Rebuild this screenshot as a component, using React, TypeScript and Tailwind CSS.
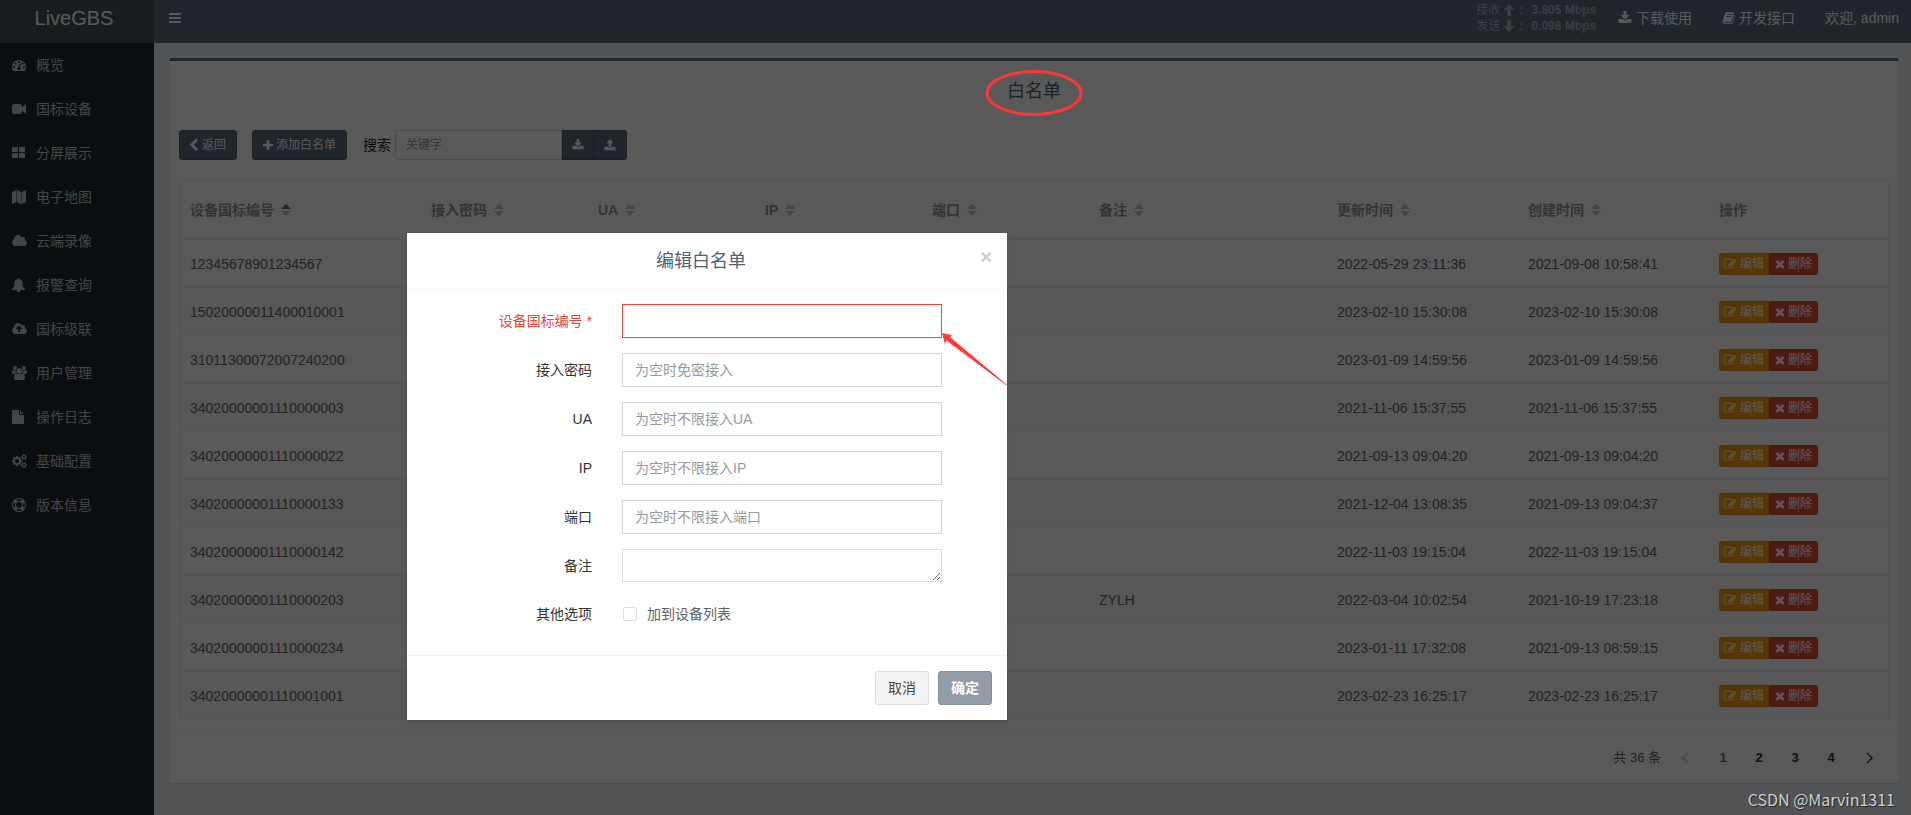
import type { ReactNode } from "react"

// Font Awesome 4 glyphs, drawn on a 1792 unit em
const DOT = "q0-26-19-45t-45-19-45 19-19 45 19 45 45 19 45-19 19-45z"
const SMALL_COG =
  "v140q0 16-149 31-12 27-30 52 51 113 51 138 0 4-4 7-122 71-124 71-8 0-46-47t-52-68q-20 2-30 2t-30-2q-14 21-52 68t-46 47q-2 0-124-71-4-3-4-7 0-25 51-138-18-25-30-52-149-15-149-31v-140q0-16 149-31 13-29 30-52-51-113-51-138 0-4 4-7 4-2 35-20t59-34 30-16q8 0 46 46.5t52 67.5q20-2 30-2t30 2q51-71 92-112l6-2q4 0 124 70 4 3 4 7 0 25-51 138 17 23 30 52 149 15 149 31z"
const CLOUD =
  "q0 159-112.5 271.5t-271.5 112.5h-1088q-185 0-316.5-131.5t-131.5-316.5q0-130 70-240t188-165q-2-30-2-43 0-212 150-362t362-150q156 0 285.5 87t188.5 231q71-62 166-62 106 0 181 75t75 181q0 76-41 138 130 31 213.5 135.5t83.5 238.5z"

const icons = {
  dashboard: "M384 1152q0-53-37.5-90.5t-90.5-37.5-90.5 37.5-37.5 90.5 37.5 90.5 90.5 37.5 90.5-37.5 37.5-90.5zm192-448q0-53-37.5-90.5t-90.5-37.5-90.5 37.5-37.5 90.5 37.5 90.5 90.5 37.5 90.5-37.5 37.5-90.5zm428 481l101-382q6-26-7.5-48.5t-38.5-29.5-48 6.5-30 39.5l-101 382q-60 5-107 43.5t-63 98.5q-20 77 20 146t117 89 146-20 89-117q16-60-6-117t-72-91zm660-33q0-53-37.5-90.5t-90.5-37.5-90.5 37.5-37.5 90.5 37.5 90.5 90.5 37.5 90.5-37.5 37.5-90.5zm-640-640q0-53-37.5-90.5t-90.5-37.5-90.5 37.5-37.5 90.5 37.5 90.5 90.5 37.5 90.5-37.5 37.5-90.5zm448 192q0-53-37.5-90.5t-90.5-37.5-90.5 37.5-37.5 90.5 37.5 90.5 90.5 37.5 90.5-37.5 37.5-90.5zm320 448q0 261-141 483-19 29-54 29h-1402q-35 0-54-29-141-221-141-483 0-182 71-348t191-286 286-191 348-71 348 71 286 191 191 286 71 348z",
  video: "M1792 352v1088q0 42-39 59-13 5-25 5-27 0-45-19l-403-403v166q0 119-84.5 203.5t-203.5 84.5h-704q-119 0-203.5-84.5t-84.5-203.5v-704q0-119 84.5-203.5t203.5-84.5h704q119 0 203.5 84.5t84.5 203.5v165l403-402q18-19 45-19 12 0 25 5 39 17 39 59z",
  grid: "M768 1024v384q0 52-38 90t-90 38h-512q-52 0-90-38t-38-90v-384q0-52 38-90t90-38h512q52 0 90 38t38 90zm0-768v384q0 52-38 90t-90 38h-512q-52 0-90-38t-38-90v-384q0-52 38-90t90-38h512q52 0 90 38t38 90zm896 768v384q0 52-38 90t-90 38h-512q-52 0-90-38t-38-90v-384q0-52 38-90t90-38h512q52 0 90 38t38 90zm0-768v384q0 52-38 90t-90 38h-512q-52 0-90-38t-38-90v-384q0-52 38-90t90-38h512q52 0 90 38t38 90z",
  map: "M512 0q13 0 22.5 9.5t9.5 22.5v1472q0 20-17 28l-480 256q-7 4-15 4-13 0-22.5-9.5t-9.5-22.5v-1472q0-20 17-28l480-256q7-4 15-4zm1248 0q13 0 22.5 9.5t9.5 22.5v1472q0 20-17 28l-480 256q-7 4-15 4-13 0-22.5-9.5t-9.5-22.5v-1472q0-20 17-28l480-256q7-4 15-4zm-1120 0q8 0 14 3l512 256q18 10 18 29v1472q0 13-9.5 22.5t-22.5 9.5q-8 0-14-3l-512-256q-18-10-18-29v-1472q0-13 9.5-22.5t22.5-9.5z",
  cloud: "M1920 1152" + CLOUD,
  bell: "M1664 1408q0 52-38 90t-90 38h-448q0 106-75 181t-181 75-181-75-75-181h-448q-52 0-90-38t-38-90q50-42 91-88t85-119.5 74.5-158.5 50-206 19.5-260q0-152 117-282.5t307-158.5q-8-19-8-39 0-40 28-68t68-28 68 28 28 68q0 20-8 39 190 28 307 158.5t117 282.5q0 139 19.5 260t50 206 74.5 158.5 85 119.5 91 88z",
  cloudUpload: "M1280 864q0-14-9-23l-352-352q-9-9-23-9t-23 9l-351 351q-10 12-10 24 0 14 9 23t23 9h224v352q0 13 9.5 22.5t22.5 9.5h192q13 0 22.5-9.5t9.5-22.5v-352h224q13 0 22.5-9.5t9.5-22.5zM1920 1152" + CLOUD,
  users: "M593 896q-162 5-265 128h-134q-82 0-138-40.5t-56-118.5q0-353 124-353 6 0 43.5 21t97.5 42.5 119 21.5q67 0 133-23-5 37-5 66 0 139 81 256zm1071 637q0 120-73 189.5t-194 69.5h-874q-121 0-194-69.5t-73-189.5q0-53 3.5-103.5t14-109 26.5-108.5 43-97.5 62-81 85.5-53.5 111.5-20q10 0 43 21.5t73 48 107 48 135 21.5 135-21.5 107-48 73-48 43-21.5q61 0 111.5 20t85.5 53.5 62 81 43 97.5 26.5 108.5 14 109 3.5 103.5zm-1024-1277q0 106-75 181t-181 75-181-75-75-181 75-181 181-75 181 75 75 181zm704 384q0 159-112.5 271.5t-271.5 112.5-271.5-112.5-112.5-271.5 112.5-271.5 271.5-112.5 271.5 112.5 112.5 271.5zm576 225q0 78-56 118.5t-138 40.5h-134q-103-123-265-128 81-117 81-256 0-29-5-66 66 23 133 23 59 0 119-21.5t97.5-42.5 43.5-21q124 0 124 353zm-128-609q0 106-75 181t-181 75-181-75-75-181 75-181 181-75 181 75 75 181z",
  file: "M1024 512v-472q22 14 36 28l408 408q14 14 28 36h-472zm-128 32q0 40 28 68t68 28h544v1056q0 40-28 68t-68 28h-1344q-40 0-68-28t-28-68v-1600q0-40 28-68t68-28h800v544z",
  cogs: "M896 896q0-106-75-181t-181-75-181 75-75 181 75 181 181 75 181-75 75-181zm768 512q0-52-38-90t-90-38-90 38-38 90q0 53 37.5 90.5t90.5 37.5 90.5-37.5 37.5-90.5zm0-1024q0-52-38-90t-90-38-90 38-38 90q0 53 37.5 90.5t90.5 37.5 90.5-37.5 37.5-90.5zm-384 421v185q0 10-7 19.5t-16 10.5l-155 24q-11 35-32 76 34 48 90 115 7 11 7 20 0 12-7 19-23 30-82.5 89.5t-78.5 59.5q-11 0-21-7l-115-90q-37 19-77 31-11 108-23 155-7 24-30 24h-186q-11 0-20-7.5t-10-17.5l-23-153q-34-10-75-31l-118 89q-7 7-20 7-11 0-21-8-144-133-144-160 0-9 7-19 10-14 41-53t47-61q-23-44-35-82l-152-24q-10-1-17-9.5t-7-19.5v-185q0-10 7-19.5t16-10.5l155-24q11-35 32-76-34-48-90-115-7-11-7-20 0-12 7-20 22-30 82-89t79-59q11 0 21 7l115 90q34-18 77-32 11-108 23-154 7-24 30-24h186q11 0 20 7.5t10 17.5l23 153q34 10 75 31l118-89q8-7 20-7 11 0 21 8 144 133 144 160 0 8-7 19-12 16-42 54t-45 60q23 48 34 82l152 23q10 2 17 10.5t7 19.5zM1920 1338" + SMALL_COG + "M1920 314" + SMALL_COG,
  lifeRing: "M896 0q182 0 348 71t286 191 191 286 71 348-71 348-191 286-286 191-348 71-348-71-286-191-191-286-71-348 71-348 191-286 286-191 348-71zm0 128q-190 0-361 90l194 194q82-28 167-28t167 28l194-194q-171-90-361-90zm-678 1129l194-194q-28-82-28-167t28-167l-194-194q-90 171-90 361t90 361zm678 407q190 0 361-90l-194-194q-82 28-167 28t-167-28l-194 194q171 90 361 90zm0-384q159 0 271.5-112.5t112.5-271.5-112.5-271.5-271.5-112.5-271.5 112.5-112.5 271.5 112.5 271.5 271.5 112.5zm484-217l194 194q90-171 90-361t-90-361l-194 194q28 82 28 167t-28 167z",
  bars: "M1664 1344v128q0 26-19 45t-45 19h-1408q-26 0-45-19t-19-45v-128q0-26 19-45t45-19h1408q26 0 45 19t19 45zm0-512v128q0 26-19 45t-45 19h-1408q-26 0-45-19t-19-45v-128q0-26 19-45t45-19h1408q26 0 45 19t19 45zm0-512v128q0 26-19 45t-45 19h-1408q-26 0-45-19t-19-45v-128q0-26 19-45t45-19h1408q26 0 45 19t19 45z",
  download: "M1344 1344" + DOT + "M1600 1344" + DOT + "M1728 1120v320q0 40-28 68t-68 28h-1472q-40 0-68-28t-28-68v-320q0-40 28-68t68-28h465l135 136q58 56 136 56t136-56l136-136h464q40 0 68 28t28 68zm-325-569q17 41-14 70l-448 448q-18 19-45 19t-45-19l-448-448q-31-29-14-70 17-39 59-39h256v-448q0-26 19-45t45-19h256q26 0 45 19t19 45v448h256q42 0 59 39z",
  upload: "M1344 1472" + DOT + "M1600 1472" + DOT + "M1728 1248v320q0 40-28 68t-68 28h-1472q-40 0-68-28t-28-68v-320q0-40 28-68t68-28h427q21 56 70.5 92t110.5 36h256q61 0 110.5-36t70.5-92h427q40 0 68 28t28 68zm-325-648q-17 40-59 40h-256v448q0 26-19 45t-45 19h-256q-26 0-45-19t-19-45v-448h-256q-42 0-59-40-17-39 14-69l448-448q18-19 45-19t45 19l448 448q31 30 14 69z",
  book: "M1703 478q40 57 18 129l-275 906q-19 64-76.5 107.5t-122.5 43.5h-923q-77 0-148.5-53.5t-99.5-131.5q-24-67-2-127 0-4 3-27t4-37q1-8-3-21.5t-3-19.5q2-11 8-21t16.5-23.5 16.5-23.5q23-38 45-91.5t30-91.5q3-10 .5-30t-.5-28q3-11 17-28t17-23q21-36 42-92t25-90q1-9-2.5-32t.5-28q4-13 22-30.5t22-22.5q19-26 42.5-84.5t27.5-96.5q1-8-3-25.5t-2-26.5q2-8 9-18t18-23 17-21q8-12 16.5-30.5t15-35 16-36 19.5-32 26.5-23.5 36-11.5 47.5 5.5l-1 3q38-9 51-9h761q74 0 114 56t18 130l-274 906q-36 119-71.5 153.5t-128.5 34.5h-869q-27 0-38 15-11 16-1 43 24 70 144 70h923q29 0 56-15.5t35-41.5l300-987q7-22 5-57 38 15 59 43zm-1064 2q-4 13 2 22.5t20 9.5h608q13 0 25.5-9.5t16.5-22.5l21-64q4-13-2-22.5t-20-9.5h-608q-13 0-25.5 9.5t-16.5 22.5zm-83 256q-4 13 2 22.5t20 9.5h608q13 0 25.5-9.5t16.5-22.5l21-64q4-13-2-22.5t-20-9.5h-608q-13 0-25.5 9.5t-16.5 22.5z",
  edit: "M888 1184l116-116-152-152-116 116v56h96v96h56zm440-720q-16-16-33 1l-350 350q-17 17-1 33t33-1l350-350q17-17 1-33zm80 594v190q0 119-84.5 203.5t-203.5 84.5h-832q-119 0-203.5-84.5t-84.5-203.5v-832q0-119 84.5-203.5t203.5-84.5h832q63 0 117 25 15 7 18 23 3 17-9 29l-49 49q-14 14-32 8-23-6-45-6h-832q-66 0-113 47t-47 113v832q0 66 47 113t113 47h832q66 0 113-47t47-113v-126q0-13 9-22l64-64q15-15 35-7t20 29zm-96-738l288 288-672 672h-288v-288zm444 132l-92 92-288-288 92-92q28-28 68-28t68 28l152 152q28 28 28 68t-28 68z",
  times: "M1490 1322q0 40-28 68l-136 136q-28 28-68 28t-68-28l-294-294-294 294q-28 28-68 28t-68-28l-136-136q-28-28-28-68t28-68l294-294-294-294q-28-28-28-68t28-68l136-136q28-28 68-28t68 28l294 294 294-294q28-28 68-28t68 28l136 136q28 28 28 68t-28 68l-294 294 294 294q28 28 28 68z",
  plus: "M1600 736v192q0 40-28 68t-68 28h-416v416q0 40-28 68t-68 28h-192q-40 0-68-28t-28-68v-416h-416q-40 0-68-28t-28-68v-192q0-40 28-68t68-28h416v-416q0-40 28-68t68-28h192q40 0 68 28t28 68v416h416q40 0 68 28t28 68z",
  chevronLeft: "M1427 301l-531 531 531 531q19 19 19 45t-19 45l-166 166q-19 19-45 19t-45-19l-742-742q-19-19-19-45t19-45l742-742q19-19 45-19t45 19l166 166q19 19 19 45t-19 45z",
}

type IconName = keyof typeof icons

function Icon({ name, className = "size-[14px]", viewBox = "0 0 1792 1792" }: { name: IconName; className?: string; viewBox?: string }) {
  return (
    <svg className={`shrink-0 overflow-visible ${className}`} viewBox={viewBox} fill="currentColor" aria-hidden="true">
      <path d={icons[name]} />
    </svg>
  )
}

function TrafficArrow({ down = false }: { down?: boolean }) {
  return (
    <svg className={down ? "size-3 rotate-180" : "size-3"} viewBox="0 0 12 12" fill="currentColor" aria-hidden="true">
      <path d="M6 0L11.5 6H8V12H4V6H0.5Z" />
    </svg>
  )
}

const menu: { icon: IconName; label: string; wide?: boolean }[] = [
  { icon: "dashboard", label: "概览" },
  { icon: "video", label: "国标设备" },
  { icon: "grid", label: "分屏展示" },
  { icon: "map", label: "电子地图" },
  { icon: "cloud", label: "云端录像", wide: true },
  { icon: "bell", label: "报警查询" },
  { icon: "cloudUpload", label: "国标级联", wide: true },
  { icon: "users", label: "用户管理", wide: true },
  { icon: "file", label: "操作日志" },
  { icon: "cogs", label: "基础配置", wide: true },
  { icon: "lifeRing", label: "版本信息" },
]

const columns = [
  { label: "设备国标编号", width: "w-[241px]", sort: "asc" },
  { label: "接入密码", width: "w-[167px]", sort: "none" },
  { label: "UA", width: "w-[167px]", sort: "none" },
  { label: "IP", width: "w-[167px]", sort: "none" },
  { label: "端口", width: "w-[167px]", sort: "none" },
  { label: "备注", width: "w-[238px]", sort: "none" },
  { label: "更新时间", width: "w-[191px]", sort: "none" },
  { label: "创建时间", width: "w-[191px]", sort: "none" },
  { label: "操作", width: "w-[179px]", sort: null },
]

const rows = [
  { id: "12345678901234567", remark: "", updated: "2022-05-29 23:11:36", created: "2021-09-08 10:58:41" },
  { id: "15020000011400010001", remark: "", updated: "2023-02-10 15:30:08", created: "2023-02-10 15:30:08" },
  { id: "31011300072007240200", remark: "", updated: "2023-01-09 14:59:56", created: "2023-01-09 14:59:56" },
  { id: "34020000001110000003", remark: "", updated: "2021-11-06 15:37:55", created: "2021-11-06 15:37:55" },
  { id: "34020000001110000022", remark: "", updated: "2021-09-13 09:04:20", created: "2021-09-13 09:04:20" },
  { id: "34020000001110000133", remark: "", updated: "2021-12-04 13:08:35", created: "2021-09-13 09:04:37" },
  { id: "34020000001110000142", remark: "", updated: "2022-11-03 19:15:04", created: "2022-11-03 19:15:04" },
  { id: "34020000001110000203", remark: "ZYLH", updated: "2022-03-04 10:02:54", created: "2021-10-19 17:23:18" },
  { id: "34020000001110000234", remark: "", updated: "2023-01-11 17:32:08", created: "2021-09-13 08:59:15" },
  { id: "34020000001110001001", remark: "", updated: "2023-02-23 16:25:17", created: "2023-02-23 16:25:17" },
]

const fields = [
  { id: "password", label: "接入密码", placeholder: "为空时免密接入" },
  { id: "ua", label: "UA", placeholder: "为空时不限接入UA" },
  { id: "ip", label: "IP", placeholder: "为空时不限接入IP" },
  { id: "port", label: "端口", placeholder: "为空时不限接入端口" },
]

function Header() {
  return (
    <header className="flex h-[43px] text-white">
      <a href="#" className="flex w-[154px] shrink-0 justify-center bg-[#44535a] pt-1 pr-1.5 text-xl leading-7">
        LiveGBS
      </a>
      <nav className="flex flex-1 items-center bg-[#5b6a7d] px-3 pb-2">
        <button type="button" aria-label="切换菜单" className="px-[2px]">
          <Icon name="bars" />
        </button>
        <div className="ml-auto mr-[22px] grid grid-cols-[auto_auto_auto_auto] items-center text-xs leading-4 font-bold text-[#a9b0b5]">
          <span className="mr-[3px] font-normal">接收</span>
          <TrafficArrow />
          <span className="mx-1">:</span>
          <span className="ml-1">3.805 Mbps</span>
          <span className="mr-[3px] font-normal">发送</span>
          <TrafficArrow down />
          <span className="mx-1">:</span>
          <span className="ml-1">0.098 Mbps</span>
        </div>
        <div className="flex items-center gap-[30px] text-sm leading-5">
          <a href="#" className="flex items-center gap-1">
            <Icon name="download" />
            下载使用
          </a>
          <a href="#" className="flex items-center gap-1">
            <Icon name="book" className="h-[14px] w-[13px]" viewBox="0 0 1728 1792" />
            开发接口
          </a>
          <a href="#">欢迎, admin</a>
        </div>
      </nav>
    </header>
  )
}

function Sidebar() {
  return (
    <aside className="w-[154px] shrink-0 bg-[#222930]">
      <ul>
        {menu.map((item) => (
          <li key={item.label}>
            <a href="#" className="flex h-11 items-center gap-[10px] px-3 text-sm text-[#b8c7ce]">
              <span className="flex w-[14px]">
                <Icon
                  name={item.icon}
                  className={item.wide ? "h-[14px] w-[15px]" : "size-[14px]"}
                  viewBox={item.wide ? "0 0 1920 1792" : "0 0 1792 1792"}
                />
              </span>
              {item.label}
            </a>
          </li>
        ))}
      </ul>
    </aside>
  )
}

function SortCaret({ sort }: { sort: string }) {
  return (
    <svg className="h-3 w-[10px]" viewBox="0 0 10 12" aria-hidden="true">
      <path d="M0 5L5 0L10 5Z" fill={sort === "asc" ? "#5b6a7d" : "#c0c4cc"} />
      <path d="M0 7L5 12L10 7Z" fill="#c0c4cc" />
    </svg>
  )
}

function WhitelistTable() {
  return (
    <div className="border-x border-t border-[#ebeef5]">
      <table className="w-full table-fixed border-separate border-spacing-0 text-left text-sm">
        <thead>
          <tr className="h-[59px] text-[#909399]">
            {columns.map((col) => (
              <th key={col.label} scope="col" className={`border-b border-[#ebeef5] px-[10px] font-bold ${col.width}`}>
                <span className="flex items-center gap-[7px]">
                  {col.label}
                  {col.sort && <SortCaret sort={col.sort} />}
                </span>
              </th>
            ))}
          </tr>
        </thead>
        <tbody className="text-[#606266]">
          {rows.map((row) => (
            <tr key={row.id} className="h-12 even:bg-[#fafafa]">
              <Cell>{row.id}</Cell>
              <Cell />
              <Cell />
              <Cell />
              <Cell />
              <Cell>{row.remark}</Cell>
              <Cell>{row.updated}</Cell>
              <Cell>{row.created}</Cell>
              <Cell>
                <div className="flex text-xs text-white">
                  <button type="button" className="flex h-[22px] items-center gap-1 rounded-l-[3px] border border-[#e08e0b] bg-[#f39c12] px-1">
                    <Icon name="edit" className="size-3" />
                    编辑
                  </button>
                  <button type="button" className="flex h-[22px] items-center gap-[3px] rounded-r-[3px] border border-[#d73925] bg-[#dd4b39] px-[5px]">
                    <Icon name="times" className="size-[10px]" viewBox="192 192 1408 1408" />
                    删除
                  </button>
                </div>
              </Cell>
            </tr>
          ))}
        </tbody>
      </table>
    </div>
  )
}

function Cell({ children }: { children?: ReactNode }) {
  return <td className="border-b border-[#ebeef5] px-[10px]">{children}</td>
}

function Pagination() {
  return (
    <div className="mt-[11px] flex h-[52px] items-center justify-end border-t border-[#f4f4f4] pr-4 text-[13px] text-[#303133]">
      <span className="mr-[10px] text-[#606266]">共 36 条</span>
      <button type="button" aria-label="上一页" className="mr-[6px] flex w-7 justify-center text-[#c0c4cc]">
        <Chevron d="M6 1L1 6L6 11" />
      </button>
      {[1, 2, 3, 4].map((page) => (
        <button
          key={page}
          type="button"
          className={page === 1 ? "w-9 text-center font-bold text-[#5b6a7d]" : "w-9 text-center font-bold"}
        >
          {page}
        </button>
      ))}
      <button type="button" aria-label="下一页" className="ml-[6px] flex w-7 justify-center">
        <Chevron d="M1 1L6 6L1 11" />
      </button>
    </div>
  )
}

function Chevron({ d }: { d: string }) {
  return (
    <svg className="h-3 w-[7px]" viewBox="0 0 7 12" fill="none" stroke="currentColor" strokeWidth="1.4" aria-hidden="true">
      <path d={d} />
    </svg>
  )
}

function EditDialog() {
  return (
    <form role="dialog" aria-labelledby="dialog-title" className="absolute top-[233px] left-[407px] z-50 w-[600px] bg-white text-sm text-[#333] shadow-[0_2px_3px_rgba(0,0,0,0.13)]">
      <div className="flex h-[57px] items-start border-b border-[#f4f4f4] p-[15px]">
        <h4 id="dialog-title" className="flex-1 text-center text-lg leading-[26px] text-[#4f6075]">编辑白名单</h4>
        <button type="button" aria-label="关闭" className="w-3 text-[21px] leading-[18px] font-bold text-[#ccc]">×</button>
      </div>

      <div className="flex flex-col gap-[15px] pt-[14px] pb-6">
        <div className="grid grid-cols-12 items-center">
          <label htmlFor="device-id" className="col-span-4 pr-[15px] text-right text-[#dd4b39]">设备国标编号 *</label>
          <div className="relative col-span-7 px-[15px]">
            <input id="device-id" type="text" className="block h-[34px] w-full border border-[#dd4b39] px-3 outline-none" />
            <svg className="absolute top-[28px] left-[334px] h-[58px] w-[72px]" viewBox="0 0 72 58" fill="#ff3b3b" aria-hidden="true">
              <path d="M1 1L11 3L9 6L70 57L6 8L4 12Z" />
              <path d="M9 5L71 57L6 9Z" />
            </svg>
          </div>
        </div>

        {fields.map((field) => (
          <div key={field.id} className="grid grid-cols-12 items-center">
            <label htmlFor={field.id} className="col-span-4 pr-[15px] text-right">{field.label}</label>
            <div className="col-span-7 px-[15px]">
              <input
                id={field.id}
                type="text"
                placeholder={field.placeholder}
                className="block h-[34px] w-full border border-[#d2d6de] px-3 placeholder:text-[#999]"
              />
            </div>
          </div>
        ))}

        <div className="grid grid-cols-12 items-center">
          <label htmlFor="remark" className="col-span-4 pr-[15px] text-right">备注</label>
          <div className="col-span-7 px-[15px]">
            <textarea id="remark" rows={1} className="block h-[33px] w-full resize-y border border-[#dcdfe6] px-3 py-1" />
          </div>
        </div>

        <div className="grid h-[34px] grid-cols-12 items-center">
          <span className="col-span-4 pr-[15px] text-right">其他选项</span>
          <label className="col-span-7 flex items-center gap-[10px] px-4 text-[#606266]">
            <input type="checkbox" className="size-[14px] appearance-none rounded-[2px] border border-[#dcdfe6] bg-white" />
            加到设备列表
          </label>
        </div>
      </div>

      <div className="flex justify-end gap-[9px] border-t border-[#f4f4f4] p-[15px]">
        <button type="button" className="h-[34px] rounded-[3px] border border-[#ddd] bg-[#f4f4f4] px-3 text-[#444]">取消</button>
        <button type="submit" className="h-[34px] rounded-[3px] border border-[#83909c] bg-[#929da8] px-3 font-bold text-white">确定</button>
      </div>
    </form>
  )
}

export default function App() {
  return (
    <div className="relative flex min-h-screen flex-col bg-[#ecf0f5] font-['Liberation_Sans','Noto_Sans_CJK_SC',sans-serif]">
      <Header />
      <div className="flex flex-1">
        <Sidebar />
        <main className="min-w-0 flex-1 px-[15px] pt-[15px] pr-3 pb-8">
          <section className="rounded-[3px] border-t-[3px] border-[#5b6a7d] bg-white shadow-[0_1px_1px_rgba(0,0,0,0.1)]">
            <div className="px-[10px] pt-5">
              <h3 className="text-center text-lg leading-5 text-[#4f6075]">
                <span className="relative">
                  白名单
                  <svg className="absolute -top-3 -left-[22px] z-50 h-12 w-[98px]" viewBox="0 0 98 48" fill="none" stroke="#ff3636" strokeWidth="3" aria-hidden="true">
                    <ellipse cx="49" cy="24" rx="47" ry="21.5" />
                  </svg>
                </span>
              </h3>

              <div className="mt-[29px] mb-5 flex items-center text-xs">
                <button type="button" className="flex h-[30px] items-center gap-1 rounded-[3px] border border-[#4c5a6b] bg-[#5b6a7d] px-[10px] text-white">
                  <Icon name="chevronLeft" className="h-3 w-2" viewBox="410 64 1060 1600" />
                  返回
                </button>
                <button type="button" className="ml-[15px] flex h-[30px] items-center gap-[3px] rounded-[3px] border border-[#4c5a6b] bg-[#5b6a7d] px-[10px] text-white">
                  <Icon name="plus" className="size-[10px]" viewBox="192 128 1408 1408" />
                  添加白名单
                </button>
                <label htmlFor="keyword" className="ml-4 text-sm text-[#222]">搜索</label>
                <input
                  id="keyword"
                  type="text"
                  placeholder="关键字"
                  className="ml-1 h-[30px] w-[167px] rounded-l-[3px] border border-[#d2d6de] bg-white px-[10px] placeholder:text-[#999]"
                />
                <button type="button" aria-label="下载" className="flex h-[30px] w-8 items-center justify-center border border-[#4c5a6b] bg-[#5b6a7d] text-white">
                  <Icon name="download" className="size-3" />
                </button>
                <button type="button" aria-label="上传" className="flex h-[30px] w-[33px] items-center justify-center rounded-r-[3px] border border-l-0 border-[#4c5a6b] bg-[#5b6a7d] text-white">
                  <Icon name="upload" className="size-3" />
                </button>
              </div>

              <WhitelistTable />
            </div>
            <Pagination />
          </section>
        </main>
      </div>

      <div className="absolute inset-0 z-40 bg-black/65" />
      <EditDialog />
      <span className="absolute right-4 bottom-1 z-50 font-['Noto_Sans_CJK_SC',sans-serif] text-base text-[#d0d0d0] [text-shadow:1px_1px_1px_rgba(0,0,0,0.6)]">
        CSDN @Marvin1311
      </span>
    </div>
  )
}
